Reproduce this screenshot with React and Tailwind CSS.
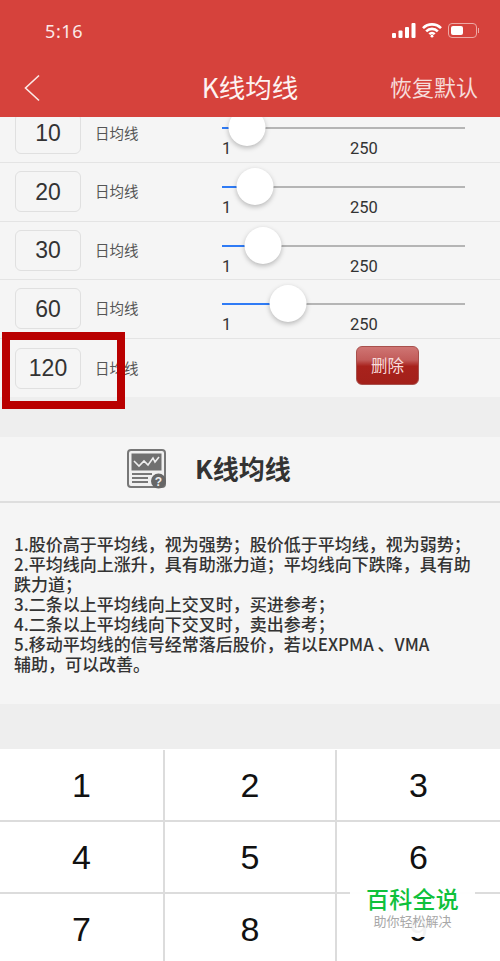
const CJK = "font-['Noto_Sans_CJK_SC','Noto_Sans',sans-serif]";
const ROWS = [
  { days: '20', thumb: 33 },
  { days: '30', thumb: 41 },
  { days: '60', thumb: 66 },
];
const TIPS = [
  '1.股价高于平均线，视为强势；股价低于平均线，视为弱势；',
  '2.平均线向上涨升，具有助涨力道；平均线向下跌降，具有助跌力道；',
  '3.二条以上平均线向上交叉时，买进参考；',
  '4.二条以上平均线向下交叉时，卖出参考；',
  '5.移动平均线的信号经常落后股价，若以EXPMA 、VMA',
  '辅助，可以改善。',
];

function StatusBar() {
  return (
    <div className="flex h-[62px] items-start justify-between pl-[45px] pr-[21px] pt-[19px]">
      <span className="font-['Noto_Sans',sans-serif] text-[18px] leading-[24px] tracking-[0.6px] text-[#fbe9e7]">5:16</span>
      <div className="mt-[4px] flex items-center gap-[6px]">
        <svg width="24" height="15" viewBox="0 0 24 15" fill="#fff">
          <rect x="0" y="10" width="4" height="5" rx="1" />
          <rect x="6.5" y="7.5" width="4" height="7.5" rx="1" />
          <rect x="13" y="4" width="4" height="11" rx="1" />
          <rect x="19.5" y="0" width="4" height="15" rx="1" />
        </svg>
        <svg width="20" height="15" viewBox="0 0 20 15" fill="none" stroke="#fff" strokeWidth="2.6">
          <path d="M1 5.2a12.6 12.6 0 0 1 18 0" />
          <path d="M4.2 8.4a8 8 0 0 1 11.6 0" />
          <path d="M7.3 11.2a3.8 3.8 0 0 1 5.4 0" />
          <circle cx="10" cy="13.2" r="1.4" fill="#fff" stroke="none" />
        </svg>
        <div className="flex items-center gap-[1px]">
          <div className="h-[15px] w-[29px] rounded-[4px] border border-[#eda9a5] p-[2px]">
            <div className="h-full w-[12px] rounded-[2px] bg-white" />
          </div>
          <div className="h-[5px] w-[1px] bg-[#eda9a5]" />
        </div>
      </div>
    </div>
  );
}

function Slider({ thumb }) {
  return (
    <div className="ml-[83px] w-[243px] shrink-0 self-start pt-[23px]">
      <div className="relative h-[2px] bg-[#b5b5b5]">
        <div className="absolute left-0 top-0 h-[2px] bg-[#2f7bf5]" style={{ width: thumb }} />
        <div
          className="absolute top-[-18px] h-[37px] w-[37px] -translate-x-1/2 rounded-full bg-white shadow-[0_2px_5px_rgba(0,0,0,0.25)]"
          style={{ left: thumb }}
        />
      </div>
      <div className="mt-[10px] flex font-['Roboto',sans-serif] text-[16.5px] leading-[20px] text-[#333]">
        <span className="w-[128px]">1</span>
        <span>250</span>
      </div>
    </div>
  );
}

function MaRow({ days, children, className = '' }) {
  return (
    <div className={`flex h-[58.6px] items-center border-b border-[#e4e4e4] pl-[15px] ${className}`}>
      <div className="flex h-[41px] w-[66px] shrink-0 items-center justify-center rounded-[6px] border border-[#e0e0e0] font-['Liberation_Sans',sans-serif] text-[23px] text-[#333]">
        {days}
      </div>
      <span className={`ml-[14px] -mt-[1px] w-[44px] shrink-0 text-[14.5px] leading-[20px] text-[#555] ${CJK}`}>日均线</span>
      {children}
    </div>
  );
}

function ChartHelpIcon() {
  return (
    <svg width="40" height="40" viewBox="0 0 40 40">
      <rect x="1" y="1" width="37" height="37" rx="3" fill="#f0f0f0" stroke="#777" strokeWidth="2" />
      <rect x="4.5" y="4.5" width="30" height="17" fill="#707070" />
      <path d="M7 12l5 5 5-5 4 4 5-7 2 4 4-5" fill="none" stroke="#eee" strokeWidth="1.6" />
      <path d="M5 25h20M5 29h16M5 33h16" stroke="#777" strokeWidth="1.8" />
      <circle cx="31.5" cy="32" r="7.5" fill="#666" />
      <text x="31.5" y="36.5" textAnchor="middle" fontSize="12" fontWeight="700" fill="#eee" fontFamily="Liberation Sans">?</text>
    </svg>
  );
}

export default function App() {
  return (
    <div className="relative h-[961px] w-[500px] overflow-hidden bg-[#eeeeee]">
      <header className="relative z-10 h-[117px] bg-[#d6423c] text-white">
        <StatusBar />
        <div className="relative flex h-[55px] items-center justify-center">
          <svg className="absolute left-[23px] top-[12px]" width="18" height="28" viewBox="0 0 18 28" fill="none" stroke="#fbe9e7" strokeWidth="1.6">
            <path d="M16 1.5L2.5 14L16 26.5" />
          </svg>
          <span className={`-mt-[6px] text-[26.5px] leading-[36px] text-[#fdf3f2] ${CJK}`}>K线均线</span>
          <span className={`absolute right-[22px] top-[8px] text-[22px] leading-[32px] text-[#f6dcda] ${CJK}`}>恢复默认</span>
        </div>
      </header>

      <div className="bg-[#f5f5f5]">
        <div className="h-[46px] overflow-hidden">
          <div className="-mt-[12.6px]">
            <MaRow days="10">
              <Slider thumb={25} />
            </MaRow>
          </div>
        </div>
        {ROWS.map((r) => (
          <MaRow key={r.days} days={r.days}>
            <Slider thumb={r.thumb} />
          </MaRow>
        ))}
        <MaRow days="120" className="border-b-0">
          <button
            className={`ml-[217px] -mt-[5px] h-[39px] w-[63px] rounded-[6px] border border-[#a8504c] bg-[linear-gradient(#cf7573_0%,#c25c5a_35%,#a8221c_52%,#a3201a_100%)] text-[16.5px] text-[#f7dcdb] ${CJK}`}
          >
            删除
          </button>
        </MaRow>
      </div>

      <section className="mt-[40px] border-b-2 border-[#dedede] bg-[#f5f5f5]">
        <div className="flex h-[64px] items-center pl-[127px]">
          <ChartHelpIcon />
          <span className={`ml-[28px] -mt-[3px] text-[26px] font-bold leading-[32px] text-[#333] ${CJK}`}>K线均线</span>
        </div>
      </section>

      <section className={`h-[201px] bg-[#f5f5f5] pl-[14px] pr-[22px] pt-[31px] text-[17px] font-medium leading-[20px] text-[#333] ${CJK}`}>
        {TIPS.map((t) => (
          <p key={t}>{t}</p>
        ))}
      </section>

      <div className="mt-[45px] grid grid-cols-[165px_172px_163px] bg-white pt-[1px] font-['Liberation_Sans',sans-serif] text-[34px] text-[#111]">
        {['1', '2', '3', '4', '5', '6', '7', '8', '9'].map((n, i) => (
          <div
            key={n}
            className={`flex h-[72px] items-center justify-center border-b-2 border-[#dcdcdc] ${i % 3 !== 2 ? 'border-r-2' : ''}`}
          >
            {n}
          </div>
        ))}
      </div>

      <div className={`absolute left-[350px] top-[876px] flex h-[61px] w-[125px] flex-col items-center bg-white/95 pt-[8px] ${CJK}`}>
        <span className="text-[23px] font-medium leading-[28px] tracking-[0.2px] text-[#0fc13c]">百科全说</span>
        <span className="text-[13px] leading-[18px] text-[#a8a8a8]">助你轻松解决</span>
      </div>

      <div className="absolute left-[2px] top-[332px] h-[77px] w-[123px] border-[8px] border-[#b90000]" />
    </div>
  );
}
